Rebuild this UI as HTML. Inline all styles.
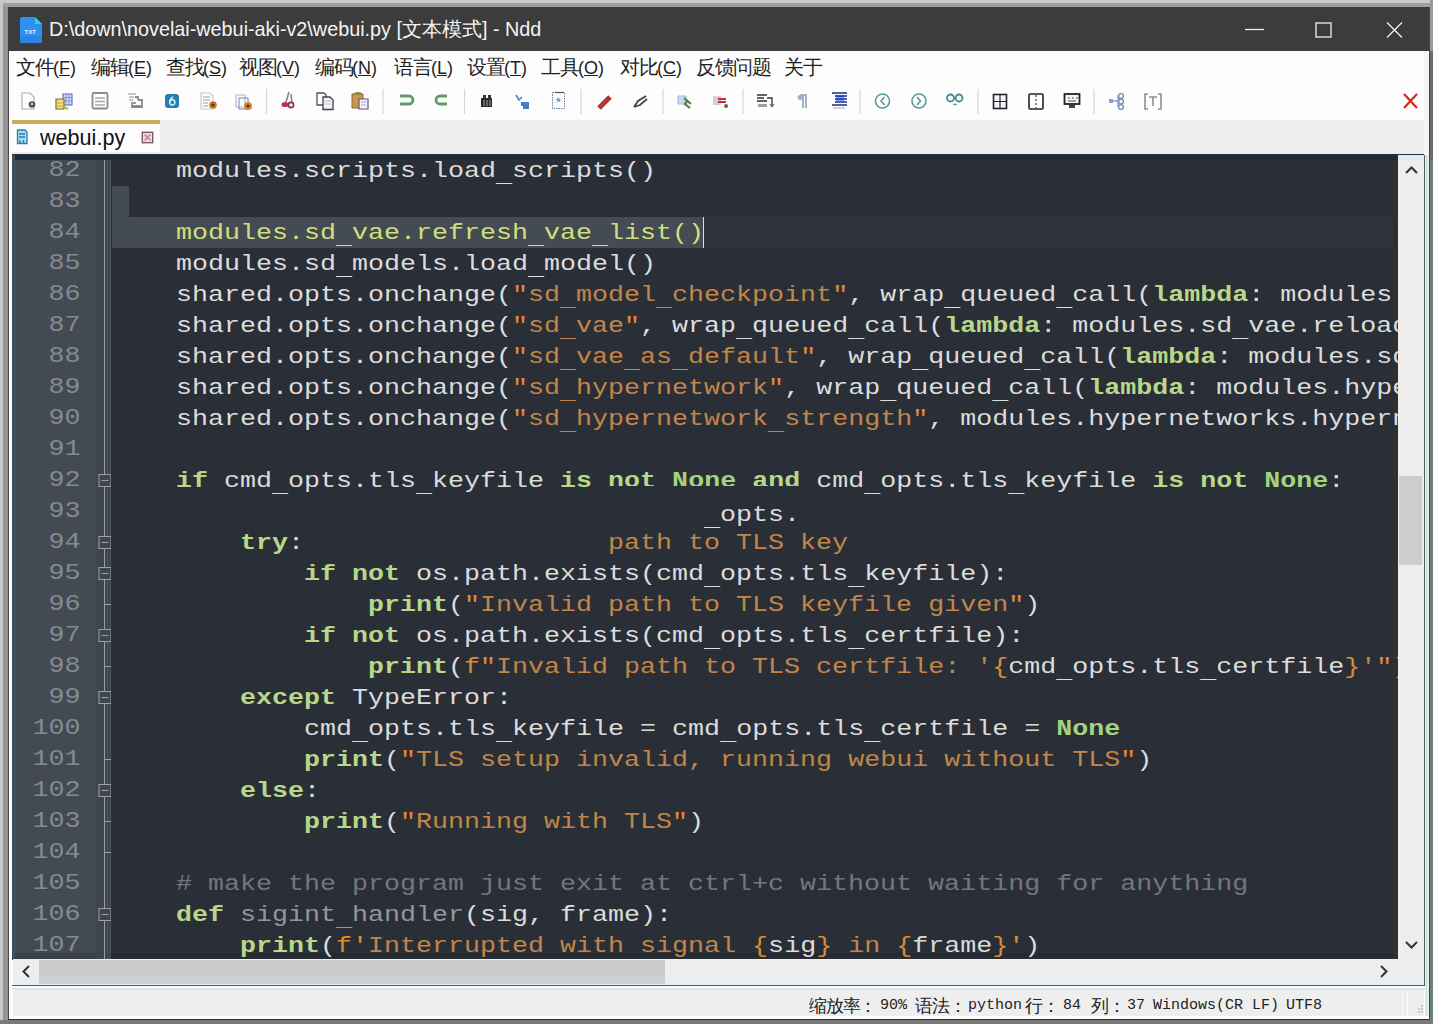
<!DOCTYPE html>
<html><head><meta charset="utf-8">
<style>
*{margin:0;padding:0;box-sizing:border-box}
html,body{width:1433px;height:1024px;overflow:hidden;background:#c4c4c4;font-family:"Liberation Sans",sans-serif}
.a{position:absolute}
#title{left:8px;top:7px;width:1421px;height:44px;background:#3c3c3c}
#ttext{left:49px;top:16px;color:#f4f4f4;font-size:19.8px;white-space:nowrap}
#menu{left:9px;top:51px;width:1416px;height:33px;background:#fdfdfd}
.mi{position:absolute;font-size:18px;color:#1e1e1e;white-space:nowrap;line-height:24px}
.cj{font-size:19.5px;letter-spacing:-1.5px}
#tool{left:9px;top:84px;width:1416px;height:36px;background:#fdfdfd}
#tabbar{left:9px;top:120px;width:1416px;height:33px;background:#eeeeee}
#tab{left:12px;top:120px;width:148px;height:33px;background:#fdfdfd}
#gold{left:12px;top:120px;width:148px;height:4px;background:#cbab62}
#ed{left:12px;top:154px;width:1413px;height:806px;background:#2a2f37;overflow:hidden}
#gut{left:15px;top:155px;width:83px;height:804px;background:#434a53}
#fold{left:98px;top:155px;width:13px;height:804px;background:#3d444c}
#code{left:111px;top:155px;width:1287px;height:803px;background:#2a2f37;overflow:hidden}
.ln{position:absolute;left:1px;width:1100px;height:31px;white-space:pre;font-family:"Liberation Mono",monospace;font-size:22px;color:#dcdcdc;line-height:31px;transform:scaleX(1.2121);transform-origin:0 0}
.num{position:absolute;left:15px;height:31px;white-space:pre;font-family:"Liberation Mono",monospace;font-size:22px;color:#848a91;line-height:31px;text-align:right;width:54px;transform:scaleX(1.2121);transform-origin:0 0}
.k{color:#b8d888;font-weight:bold}
.n{color:#a2d47e;font-weight:bold}
.s{color:#c0864a}
.q{color:#e08a30}
.c{color:#72777d}
.g{color:#92979c}
.y{color:#d0de80}
.u{position:relative;top:5px}
.cut{display:inline-block;height:20px;overflow:hidden;vertical-align:top;line-height:31px}
.st{font-family:"Liberation Mono",monospace;font-size:15px;color:#222;white-space:nowrap;line-height:20px}
.cjs{font-family:"Liberation Sans",sans-serif;font-size:18px;letter-spacing:-1.2px;line-height:20px}
</style></head><body>
<div class="a" style="left:0;top:0;width:1433px;height:3px;background:#cacaca"></div>
<div class="a" style="left:0;top:0;width:3px;height:1024px;background:#c8c8c8"></div>
<div class="a" style="left:3px;top:3px;width:5px;height:1021px;background:#939393"></div>
<div class="a" style="left:3px;top:3px;width:1430px;height:4px;background:#a0a0a0"></div>
<div class="a" style="left:8px;top:7px;width:1px;height:1013px;background:#4a4a4a"></div>
<div class="a" style="left:9px;top:51px;width:1420px;height:969px;background:#fdfdfd"></div>

<div id="title" class="a"></div>
<div id="ttext" class="a">D:\down\novelai-webui-aki-v2\webui.py [文本模式] - Ndd</div>


<!-- app icon -->
<svg class="a" style="left:18px;top:14px" width="28" height="30" viewBox="0 0 28 30">
<path d="M4 3h13l7 7v17a2 2 0 0 1-2 2H4a2 2 0 0 1-2-2V5a2 2 0 0 1 2-2z" fill="#2d8ff0"/>
<path d="M17 3l7 7h-7z" fill="#3ad0c0"/>
<path d="M2 22h22v5a2 2 0 0 1-2 2H4a2 2 0 0 1-2-2z" fill="#2a84e0"/>
<text x="6.5" y="20" font-size="6" fill="#e8f4ff" font-family="Liberation Sans" font-weight="bold">TXT</text>
</svg>
<!-- window controls -->
<svg class="a" style="left:1230px;top:10px" width="190" height="38" viewBox="1230 10 190 38">
<path d="M1245 29.5h19" stroke="#f0f0f0" stroke-width="1.3"/>
<rect x="1316" y="23" width="15" height="14" fill="none" stroke="#f0f0f0" stroke-width="1.3"/>
<path d="M1387 22.5l15 15M1402 22.5l-15 15" stroke="#f0f0f0" stroke-width="1.3"/>
</svg>
<div id="menu" class="a"></div>
<div class="mi" style="left:16px;top:55px"><span class="cj">文件</span>(<u>F</u>)</div>
<div class="mi" style="left:91px;top:55px"><span class="cj">编辑</span>(<u>E</u>)</div>
<div class="mi" style="left:166px;top:55px"><span class="cj">查找</span>(<u>S</u>)</div>
<div class="mi" style="left:239px;top:55px"><span class="cj">视图</span>(<u>V</u>)</div>
<div class="mi" style="left:315px;top:55px"><span class="cj">编码</span>(<u>N</u>)</div>
<div class="mi" style="left:394px;top:55px"><span class="cj">语言</span>(<u>L</u>)</div>
<div class="mi" style="left:467px;top:55px"><span class="cj">设置</span>(<u>T</u>)</div>
<div class="mi" style="left:541px;top:55px"><span class="cj">工具</span>(<u>O</u>)</div>
<div class="mi" style="left:620px;top:55px"><span class="cj">对比</span>(<u>C</u>)</div>
<div class="mi" style="left:696px;top:55px"><span class="cj">反馈问题</span></div>
<div class="mi" style="left:784px;top:55px"><span class="cj">关于</span></div>
<div id="tool" class="a"></div>
<!--TOOLBAR-->
<svg class="a" style="left:0;top:84px" width="1433" height="36" viewBox="0 84 1433 36">
<g fill="none" stroke-linecap="butt">
<!-- 1 new -->
<path d="M22 93h8l4 4v12h-12z" stroke="#c4c4c4" stroke-width="1.6"/>
<circle cx="32" cy="104.5" r="3.3" fill="#555" />
<circle cx="32" cy="104" r="1" fill="#fff" />
<!-- 2 open -->
<rect x="63" y="94" width="9" height="11" fill="#d8e0ff" stroke="#5060c0" stroke-width="1"/>
<path d="M63 97.5h9M63 101h9M66 94v11M69 94v11" stroke="#7080d0" stroke-width="0.8"/>
<path d="M56 99h8v10h-8z" fill="#f2e07a" stroke="#806838" stroke-width="1.2"/>
<path d="M56 103h8M56 106h8" stroke="#b8a050" stroke-width="0.8"/>
<path d="M62 106l6 3" stroke="#a8c040" stroke-width="2"/>
<!-- 3 save -->
<rect x="92.5" y="93" width="15" height="15.5" rx="1.5" stroke="#8a8a8a" stroke-width="1.8"/>
<path d="M95 98h10M95 101.5h10M95 105h10" stroke="#a8a8a8" stroke-width="1.6"/>
<!-- 4 save all -->
<path d="M128 94h8M129 97h5M129 100h4" stroke="#b4b4b4" stroke-width="1.6"/>
<path d="M135 97h3v3M138 100h4v7h-10v-3" stroke="#8c8c8c" stroke-width="1.8" fill="none"/>
<path d="M131 103h5M133 106h8" stroke="#7a7a7a" stroke-width="1.6"/>
<!-- 5 blue -->
<rect x="165" y="94" width="14" height="14" rx="3" fill="#2a7cb4"/>
<circle cx="172.3" cy="102.3" r="2.6" stroke="#c8f4ff" stroke-width="1.5" fill="none"/>
<path d="M169.7 102.3c0-3 1.5-4.5 3.5-5.5" stroke="#c8f4ff" stroke-width="1.5" fill="none"/>
<!-- 6 close -->
<path d="M201 93h9l3 3v13h-12z" stroke="#c8c8c8" stroke-width="1.2"/>
<path d="M203 97h7M203 100h7M203 103h5M203 106h5" stroke="#9a9a9a" stroke-width="1"/>
<circle cx="213" cy="105" r="3.8" fill="#c07a30"/>
<circle cx="213" cy="105" r="1.6" fill="#5a3010"/>
<!-- 7 close all -->
<path d="M236 95h9v12h-9z" stroke="#b8b8b8" stroke-width="1.2"/>
<path d="M239 98h9v11h-9z" stroke="#6880c8" stroke-width="1" />
<circle cx="248" cy="106" r="4" fill="#d08838"/>
<circle cx="248" cy="106" r="1.6" fill="#5a3010"/>
<!-- sep -->
<path d="M266.5 89v25M383 89v25M464.5 89v25M581 89v25M663 89v25M743 89v25M860 89v25M978 89v25M1094 89v25" stroke="#d6d6d6" stroke-width="1.2"/>
<!-- 8 cut -->
<path d="M289 92l-3 10M291 94l1 9" stroke="#8a8a8a" stroke-width="1.6"/>
<ellipse cx="285" cy="104.5" rx="3.5" ry="2.6" fill="#c03050"/>
<circle cx="291" cy="105" r="2.6" stroke="#803040" stroke-width="1.6"/>
<!-- 9 copy -->
<path d="M317 93h7l2 2v10h-9z" fill="#fff" stroke="#505050" stroke-width="1.3"/>
<path d="M323 97h7l3 3v9.5h-10z" fill="#f4f4fa" stroke="#404040" stroke-width="1.3"/>
<path d="M325 101h6M325 104h6" stroke="#a0a8c0" stroke-width="0.8"/>
<!-- 10 paste -->
<path d="M352 94h11v14h-11z" fill="#c89848" stroke="#8a6a30" stroke-width="1"/>
<path d="M354 94a4 2 0 0 1 8 0" fill="#7a8a50"/>
<path d="M359 99h9v10h-9z" fill="#f4f0ff" stroke="#605878" stroke-width="1.2"/>
<path d="M361 102h5M361 105h5" stroke="#a090c0" stroke-width="0.8"/>
<!-- 11 undo -->
<path d="M400 96h9a4 4 0 0 1 0 8h-9" stroke="#5e9e5e" stroke-width="2.8"/>
<!-- 12 redo -->
<path d="M447 96h-7a4 4 0 0 0 0 8h7" stroke="#5e9e5e" stroke-width="2.8"/>
<!-- 13 find -->
<path d="M481 98h11v9h-11z" fill="#2a2a2a"/>
<path d="M483 95h3v4h-3zM488 95h3v4h-3z" fill="#333"/>
<path d="M484 100v6M487 100v6M490 100v6" stroke="#d0d0d0" stroke-width="0.7"/>
<!-- 14 replace -->
<path d="M516 95l3 5l3-3" stroke="#4a8ad0" stroke-width="1.6"/>
<path d="M521 102h8v4h-8zM523 106h6v3h-6z" fill="#4a7ac0"/>
<!-- 15 find in files -->
<rect x="552.5" y="92.5" width="12" height="16" stroke="#6a7a9a" stroke-width="1" stroke-dasharray="1.5 1"/>
<path d="M555 92.5h9" stroke="#505060" stroke-width="1.2"/>
<path d="M558.5 97l1 2h2l-1.6 1.3.6 2.2-2-1.2-2 1.2.6-2.2L555.5 99h2z" fill="#7a9ad0"/>
<!-- 16 mark -->
<path d="M599 108l11-11" stroke="#b03030" stroke-width="5"/>
<path d="M601 106l7-7" stroke="#e07070" stroke-width="1" stroke-dasharray="1 1.5"/>
<!-- 17 clear mark -->
<path d="M634 107l4-6l8-5M634 107l6-2l7-6" stroke="#444" stroke-width="1.8"/>
<!-- 18 zoom in -->
<path d="M678 96h8v8h-8z" fill="#c8d8f0" stroke="#a8b8d0" stroke-width="1"/>
<path d="M684 98l7 6M688 100l-3 4l5 4" stroke="#508040" stroke-width="2.2"/>
<!-- 19 zoom out -->
<path d="M713 96h8v9h-8z" fill="#d0d0d0"/>
<path d="M718 99h8M718 102h8" stroke="#c03040" stroke-width="1.8"/>
<circle cx="726" cy="106" r="2" fill="#606060"/>
<!-- 20 wrap -->
<path d="M757 95h10M757 98h7M767 98h5v8M757 101h10" stroke="#333" stroke-width="1.3"/>
<path d="M758 104h9v3h-9z" fill="#a0a0a0"/>
<path d="M770 104l2 3l2-3" stroke="#555" stroke-width="1"/>
<!-- 21 pilcrow -->
<path d="M800 95h6v13M803 95v13" stroke="#8aa0c0" stroke-width="1.6"/>
<circle cx="800" cy="97.5" r="2.5" fill="#a0b0c8"/>
<!-- 22 indent -->
<path d="M832 93h15M835 96h12M835 99h12M835 102h12M832 105h15" stroke="#1a2a88" stroke-width="1.4"/>
<path d="M836 96.5h8M836 99.5h8" stroke="#2040d0" stroke-width="2"/>
<path d="M833 108h12" stroke="#8890b0" stroke-width="0.8"/>
<!-- 23 circle left -->
<circle cx="882.5" cy="101" r="7" stroke="#5a9aa0" stroke-width="1.6"/>
<path d="M884.5 97l-3.5 4l3.5 4" stroke="#5a9aa0" stroke-width="1.6"/>
<!-- 24 circle right -->
<circle cx="919" cy="101" r="7" stroke="#5e969a" stroke-width="1.6"/>
<path d="M917 97l3.5 4l-3.5 4" stroke="#5e969a" stroke-width="1.6"/>
<!-- 25 eyes -->
<circle cx="950.5" cy="98" r="3.5" stroke="#3a8a90" stroke-width="1.8"/>
<circle cx="959" cy="98" r="3.5" stroke="#3a8a90" stroke-width="1.8"/>
<path d="M953 104.5h4" stroke="#6a9a90" stroke-width="1.4"/>
<!-- 26 -->
<rect x="993.5" y="94.5" width="13" height="14" stroke="#202030" stroke-width="1.6"/>
<path d="M1000 94.5v14M993.5 101.5h13" stroke="#202030" stroke-width="1.2"/>
<path d="M995 96h3v4h-3zM1002 96h3v4h-3zM995 103h3v4h-3zM1002 103h3v4h-3z" fill="#f0f0f0"/>
<!-- 27 -->
<rect x="1029" y="94" width="14" height="15" rx="1" stroke="#252525" stroke-width="1.6"/>
<path d="M1036 95v13" stroke="#444" stroke-width="1.2" stroke-dasharray="2 2"/>
<!-- 28 monitor -->
<rect x="1064.5" y="94" width="15" height="10" fill="#f4f4f4" stroke="#222" stroke-width="1.8"/>
<path d="M1068 98h2M1072 98h2M1076 98h2M1068 101h8" stroke="#555" stroke-width="1"/>
<path d="M1069 105h6v3h-6z" fill="#444"/>
<!-- 29 tree -->
<path d="M1109 99h4v4h-4z" fill="#8aa0c8"/>
<path d="M1113 101h5M1118 95v12" stroke="#8aa0c8" stroke-width="1.4"/>
<circle cx="1121" cy="96" r="2.4" stroke="#7090c0" stroke-width="1.4"/>
<circle cx="1121" cy="101.5" r="2.4" stroke="#7090c0" stroke-width="1.4"/>
<circle cx="1121" cy="107" r="2.4" stroke="#7090c0" stroke-width="1.4"/>
<!-- 30 [T] -->
<path d="M1148 94h-3v15h3M1158 94h3v15h-3" stroke="#8a9098" stroke-width="1.6"/>
<path d="M1149 97h8M1153 97v9" stroke="#8a9098" stroke-width="1.6"/>
<!-- 31 red X -->
<path d="M1404 94l13 14M1417 94l-13 14" stroke="#d02a20" stroke-width="2.2"/>
</g>
</svg>
<!--/TOOLBAR-->

<div id="tabbar" class="a"></div>
<div id="tab" class="a"></div>
<div id="gold" class="a"></div>
<div class="a" style="left:40px;top:125px;font-size:21.6px;color:#111;line-height:26px">webui.py</div>
<!-- tab icon + close -->
<svg class="a" style="left:14px;top:126px" width="18" height="20" viewBox="14 126 18 20">
<path d="M17.5 130h7.5l2 2v11.5h-9.5z" fill="#a8dcf4" stroke="#2a7ab0" stroke-width="1.3"/>
<path d="M19 134h6M19 137h6M20 140v3M23.5 140v3" stroke="#2a7ab0" stroke-width="1.3"/>
</svg>
<svg class="a" style="left:140px;top:130px" width="15" height="15" viewBox="140 130 15 15">
<rect x="142.3" y="132.3" width="10.4" height="10.4" fill="#f0dde3" stroke="#7a5a66" stroke-width="1.4"/>
<path d="M144.6 134.6l5.8 5.8M150.4 134.6l-5.8 5.8" stroke="#c890a4" stroke-width="2"/>
</svg>


<div class="a" style="left:9px;top:152px;width:1416px;height:2px;background:#e6eef4"></div>
<div class="a" style="left:12px;top:154px;width:1413px;height:1px;background:#1c2632"></div>
<div id="ed" class="a"></div>
<div id="gut" class="a"></div>
<div class="a" style="left:15px;top:953px;width:83px;height:6px;background:#3a4047"></div>
<div id="fold" class="a"></div>
<div class="num" style="top:155px">82</div>
<div class="num" style="top:186px">83</div>
<div class="num" style="top:217px">84</div>
<div class="num" style="top:248px">85</div>
<div class="num" style="top:279px">86</div>
<div class="num" style="top:310px">87</div>
<div class="num" style="top:341px">88</div>
<div class="num" style="top:372px">89</div>
<div class="num" style="top:403px">90</div>
<div class="num" style="top:434px">91</div>
<div class="num" style="top:465px">92</div>
<div class="num" style="top:496px">93</div>
<div class="num" style="top:527px">94</div>
<div class="num" style="top:558px">95</div>
<div class="num" style="top:589px">96</div>
<div class="num" style="top:620px">97</div>
<div class="num" style="top:651px">98</div>
<div class="num" style="top:682px">99</div>
<div class="num" style="top:713px">100</div>
<div class="num" style="top:744px">101</div>
<div class="num" style="top:775px">102</div>
<div class="num" style="top:806px">103</div>
<div class="num" style="top:837px">104</div>
<div class="num" style="top:868px">105</div>
<div class="num" style="top:899px">106</div>
<div class="num" style="top:930px">107</div>
<svg class="a" style="left:96px;top:155px" width="16" height="804" viewBox="96 155 16 804">
<rect x="96" y="155" width="3" height="804" fill="#3f464e"/>
<path d="M104.5 155v804" stroke="#9aa0a8" stroke-width="1"/>
<path d="M107.5 155v804M110.5 155v804" stroke="#4c535b" stroke-width="1"/>
<rect x="99" y="474.5" width="12" height="12" fill="#3f464e" stroke="#9aa0a6" stroke-width="1"/>
<path d="M101.5 480.5h7" stroke="#9aa0a6" stroke-width="1"/>
<rect x="99" y="536.5" width="12" height="12" fill="#3f464e" stroke="#9aa0a6" stroke-width="1"/>
<path d="M101.5 542.5h7" stroke="#9aa0a6" stroke-width="1"/>
<rect x="99" y="567.5" width="12" height="12" fill="#3f464e" stroke="#9aa0a6" stroke-width="1"/>
<path d="M101.5 573.5h7" stroke="#9aa0a6" stroke-width="1"/>
<rect x="99" y="629.5" width="12" height="12" fill="#3f464e" stroke="#9aa0a6" stroke-width="1"/>
<path d="M101.5 635.5h7" stroke="#9aa0a6" stroke-width="1"/>
<rect x="99" y="691.5" width="12" height="12" fill="#3f464e" stroke="#9aa0a6" stroke-width="1"/>
<path d="M101.5 697.5h7" stroke="#9aa0a6" stroke-width="1"/>
<rect x="99" y="784.5" width="12" height="12" fill="#3f464e" stroke="#9aa0a6" stroke-width="1"/>
<path d="M101.5 790.5h7" stroke="#9aa0a6" stroke-width="1"/>
<rect x="99" y="908.5" width="12" height="12" fill="#3f464e" stroke="#9aa0a6" stroke-width="1"/>
<path d="M101.5 914.5h7" stroke="#9aa0a6" stroke-width="1"/>
<path d="M104.5 604.5h6.5" stroke="#9aa0a6" stroke-width="1"/>
<path d="M104.5 666.5h6.5" stroke="#9aa0a6" stroke-width="1"/>
<path d="M104.5 759.5h6.5" stroke="#9aa0a6" stroke-width="1"/>
<path d="M104.5 821.5h6.5" stroke="#9aa0a6" stroke-width="1"/>
<path d="M104.5 852.5h6.5" stroke="#9aa0a6" stroke-width="1"/>
</svg>
<div id="code" class="a">
<div class="a" style="left:0;top:798px;width:1282px;height:6px;background:#252a30"></div>
<div class="a" style="left:1282px;top:0;width:5px;height:803px;background:#2f2f2f"></div>
<div class="a" style="left:1px;top:31px;width:17px;height:62px;background:#454b53"></div>
<div class="a" style="left:1px;top:62px;width:1281px;height:31px;background:#2f343b"></div>
<div class="a" style="left:1px;top:62px;width:591px;height:31px;background:#454b53"></div>
<div class="ln" style="top:1px">    modules.scripts.load<span class="u">_</span>scripts()</div>
<div class="ln" style="top:32px"></div>
<div class="ln" style="top:63px"><span class="y">    modules.sd<span class="u">_</span>vae.refresh<span class="u">_</span>vae<span class="u">_</span>list()</span></div>
<div class="ln" style="top:94px">    modules.sd<span class="u">_</span>models.load<span class="u">_</span>model()</div>
<div class="ln" style="top:125px">    shared.opts.onchange(<span class="q">&quot;</span><span class="s">sd<span class="u">_</span>model<span class="u">_</span>checkpoint</span><span class="q">&quot;</span>, wrap<span class="u">_</span>queued<span class="u">_</span>call(<span class="k">lambda</span>: modules.sd<span class="u">_</span>models.reload<span class="u">_</span>model<span class="u">_</span>weights()))</div>
<div class="ln" style="top:156px">    shared.opts.onchange(<span class="q">&quot;</span><span class="s">sd<span class="u">_</span>vae</span><span class="q">&quot;</span>, wrap<span class="u">_</span>queued<span class="u">_</span>call(<span class="k">lambda</span>: modules.sd<span class="u">_</span>vae.reload<span class="u">_</span>vae<span class="u">_</span>weights()), call=False)</div>
<div class="ln" style="top:187px">    shared.opts.onchange(<span class="q">&quot;</span><span class="s">sd<span class="u">_</span>vae<span class="u">_</span>as<span class="u">_</span>default</span><span class="q">&quot;</span>, wrap<span class="u">_</span>queued<span class="u">_</span>call(<span class="k">lambda</span>: modules.sd<span class="u">_</span>vae.reload<span class="u">_</span>vae<span class="u">_</span>weights()), call=False)</div>
<div class="ln" style="top:218px">    shared.opts.onchange(<span class="q">&quot;</span><span class="s">sd<span class="u">_</span>hypernetwork</span><span class="q">&quot;</span>, wrap<span class="u">_</span>queued<span class="u">_</span>call(<span class="k">lambda</span>: modules.hypernetworks.hypernetwork.load<span class="u">_</span>hypernetwork(shared.opts.sd<span class="u">_</span>hypernetwork)))</div>
<div class="ln" style="top:249px">    shared.opts.onchange(<span class="q">&quot;</span><span class="s">sd<span class="u">_</span>hypernetwork<span class="u">_</span>strength</span><span class="q">&quot;</span>, modules.hypernetworks.hypernetwork.apply<span class="u">_</span>strength)</div>
<div class="ln" style="top:280px"></div>
<div class="ln" style="top:311px">    <span class="k">if</span> cmd<span class="u">_</span>opts.tls<span class="u">_</span>keyfile <span class="k">is</span> <span class="k cut">not</span> <span class="n cut">None</span> <span class="k cut">and</span> cmd<span class="u">_</span>opts.tls<span class="u">_</span>keyfile <span class="k">is</span> <span class="k">not</span> <span class="n">None</span>:</div>
<div class="ln" style="top:342px"></div>
<div class="ln" style="top:373px">        <span class="k">try</span>:</div>
<div class="ln" style="top:404px">            <span class="k">if</span> <span class="k">not</span> os.path.exists(cmd<span class="u">_</span>opts.tls<span class="u">_</span>keyfile):</div>
<div class="ln" style="top:435px">                <span class="k">print</span>(<span class="q">&quot;</span><span class="s">Invalid path to TLS keyfile given</span><span class="q">&quot;</span>)</div>
<div class="ln" style="top:466px">            <span class="k">if</span> <span class="k">not</span> os.path.exists(cmd<span class="u">_</span>opts.tls<span class="u">_</span>certfile):</div>
<div class="ln" style="top:497px">                <span class="k">print</span>(<span class="q">f&quot;</span><span class="s">Invalid path to TLS certfile: &#x27;</span><span class="q">{</span>cmd<span class="u">_</span>opts.tls<span class="u">_</span>certfile<span class="q">}</span><span class="s">&#x27;</span><span class="q">&quot;</span>)</div>
<div class="ln" style="top:528px">        <span class="k">except</span> TypeError:</div>
<div class="ln" style="top:559px">            cmd<span class="u">_</span>opts.tls<span class="u">_</span>keyfile = cmd<span class="u">_</span>opts.tls<span class="u">_</span>certfile = <span class="n">None</span></div>
<div class="ln" style="top:590px">            <span class="k">print</span>(<span class="q">&quot;</span><span class="s">TLS setup invalid, running webui without TLS</span><span class="q">&quot;</span>)</div>
<div class="ln" style="top:621px">        <span class="k">else</span>:</div>
<div class="ln" style="top:652px">            <span class="k">print</span>(<span class="q">&quot;</span><span class="s">Running with TLS</span><span class="q">&quot;</span>)</div>
<div class="ln" style="top:683px"></div>
<div class="ln" style="top:714px"><span class="c">    # make the program just exit at ctrl+c without waiting for anything</span></div>
<div class="ln" style="top:745px">    <span class="k">def</span> <span class="g">sigint<span class="u">_</span>handler</span>(sig, frame):</div>
<div class="ln" style="top:776px">        <span class="k">print</span>(<span class="q">f&#x27;</span><span class="s">Interrupted with signal </span><span class="q">{</span>sig<span class="q">}</span><span class="s"> in </span><span class="q">{</span>frame<span class="q">}</span><span class="q">&#x27;</span>)</div>
<div class="ln" style="top:345px">                                     <span class="u">_</span>opts.</div>
<div class="ln" style="top:373px"><span class="s">                               path to TLS key</span></div>
<div class="a" style="left:592px;top:62px;width:1px;height:31px;background:#d8dce8"></div>
</div>
<div class="a" style="left:12px;top:155px;width:1386px;height:5px;background:#1f2b38"></div>

<div class="a" style="left:1398px;top:155px;width:26px;height:804px;background:#eeeeee"></div>
<div class="a" style="left:1398px;top:155px;width:26px;height:5px;background:#dcecf6"></div>
<div class="a" style="left:1399px;top:476px;width:23px;height:89px;background:#cdcdcd"></div>
<div class="a" style="left:9px;top:51px;width:3px;height:935px;background:#fdfdfd"></div>
<div class="a" style="left:12px;top:155px;width:3px;height:804px;background:#3c5064"></div>

<!-- hscroll -->
<div class="a" style="left:13px;top:959px;width:1411px;height:26px;background:#eeeeee"></div>
<div class="a" style="left:13px;top:976px;width:1411px;height:9px;background:#e8eef4"></div>
<div class="a" style="left:39px;top:960px;width:626px;height:16px;background:#cbcbcb"></div>
<div class="a" style="left:39px;top:976px;width:626px;height:8px;background:#c8d0d8"></div>
<div class="a" style="left:12px;top:985px;width:1413px;height:1px;background:#4a5a6a"></div>
<div class="a" style="left:12px;top:988px;width:1413px;height:2px;background:#d8e4ee"></div>

<!-- status -->
<div class="a" style="left:13px;top:990px;width:1411px;height:26px;background:#eeeeee"></div>
<div class="a" style="left:9px;top:1016px;width:1420px;height:3px;background:#fdfdfd"></div>
<div class="a" style="left:8px;top:1019px;width:1422px;height:1px;background:#2e2e2e"></div>

<!--STATUS-->
<div class="a st" style="left:809px;top:996px"><span class="cjs">缩放率：</span></div>
<div class="a st" style="left:880px;top:996px">90%</div>
<div class="a st" style="left:915px;top:996px"><span class="cjs">语法：</span></div>
<div class="a st" style="left:968px;top:996px">python</div>
<div class="a st" style="left:1025px;top:996px"><span class="cjs">行：</span></div>
<div class="a st" style="left:1063px;top:996px">84</div>
<div class="a st" style="left:1091px;top:996px"><span class="cjs">列：</span></div>
<div class="a st" style="left:1127px;top:996px">37</div>
<div class="a st" style="left:1153px;top:996px">Windows(CR LF)</div>
<div class="a st" style="left:1286px;top:996px">UTF8</div>
<svg class="a" style="left:0;top:155px" width="1433" height="869" viewBox="0 155 1433 869">
<path d="M1406 173l5.5-5.5l5.5 5.5" fill="none" stroke="#333" stroke-width="2"/>
<path d="M1406 942l5.5 5.5l5.5-5.5" fill="none" stroke="#333" stroke-width="2"/>
<path d="M29 966l-5.5 5.5l5.5 5.5" fill="none" stroke="#333" stroke-width="2"/>
<path d="M1381 966l5.5 5.5l-5.5 5.5" fill="none" stroke="#333" stroke-width="2"/>
<path d="M1402.5 991v25M1407.5 991v25" stroke="#fafafa" stroke-width="1"/>
<path d="M1418 1012h2M1421 1012h2M1421 1009h2M1418 1009h2M1421 1006h2" stroke="#c8c8c8" stroke-width="2"/>
</svg>


<!-- right edge -->
<div class="a" style="left:1424px;top:155px;width:1px;height:831px;background:#4a605a"></div>
<div class="a" style="left:1425px;top:155px;width:4px;height:861px;background:#e0f2ec"></div>
<div class="a" style="left:1426px;top:155px;width:1px;height:861px;background:#c8dcd6"></div>
<div class="a" style="left:1424px;top:51px;width:5px;height:104px;background:#f4f4f4"></div>
<div class="a" style="left:1429px;top:7px;width:1px;height:1013px;background:#404846"></div>
<div class="a" style="left:1430px;top:0;width:3px;height:51px;background:#9a9a9a"></div>
<div class="a" style="left:1430px;top:51px;width:3px;height:109px;background:#6c6c6c"></div>
<div class="a" style="left:1430px;top:160px;width:3px;height:864px;background:#6e7e7a"></div>
<div class="a" style="left:0;top:1020px;width:1433px;height:4px;background:#7a7a7a"></div>
</body></html>
